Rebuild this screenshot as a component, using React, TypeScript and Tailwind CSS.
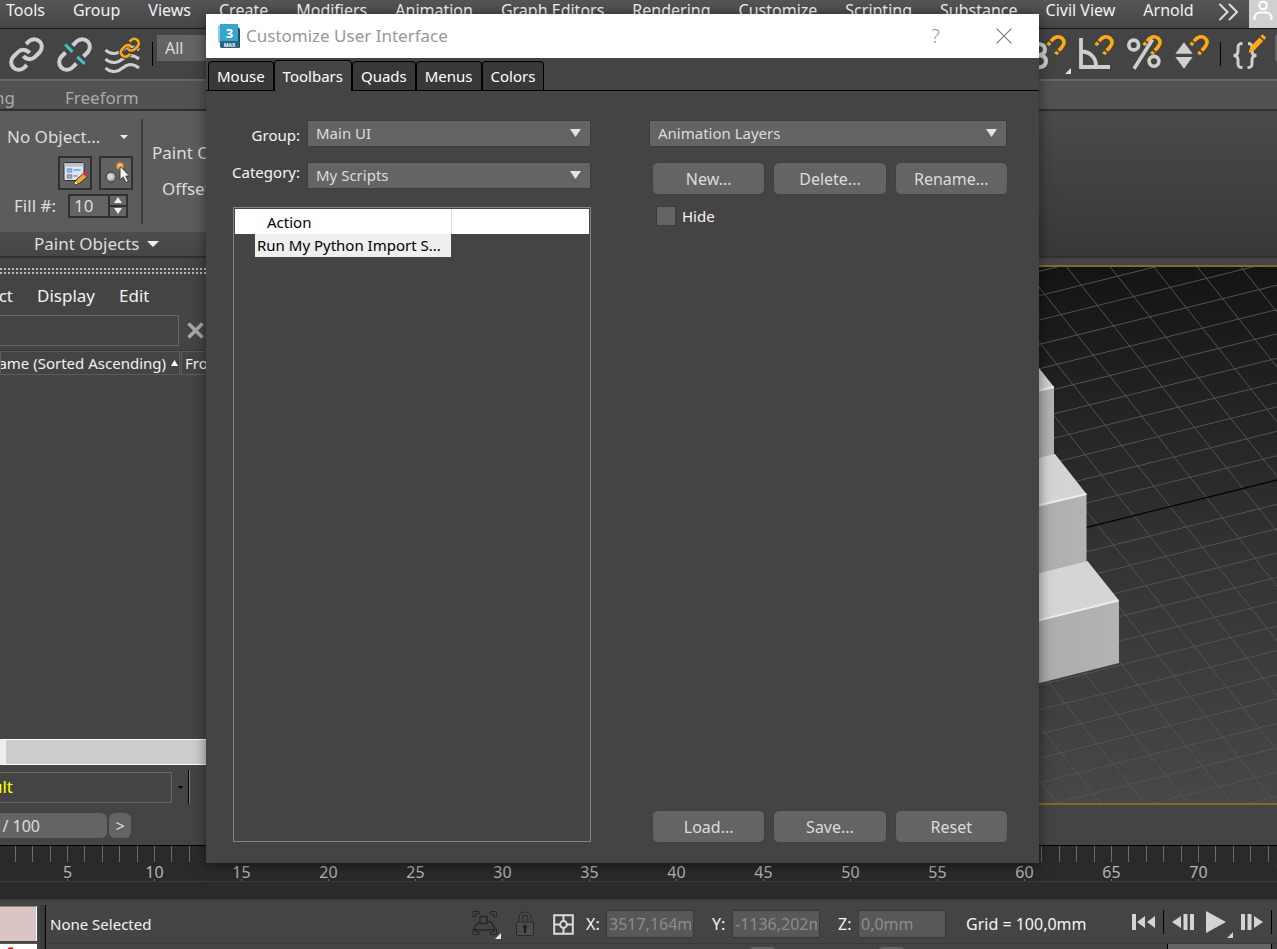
import type { ReactNode } from "react";

const MENUS = [
  "Tools", "Group", "Views", "Create", "Modifiers", "Animation", "Graph Editors",
  "Rendering", "Customize", "Scripting", "Substance", "Civil View", "Arnold",
];

const TABS = ["Mouse", "Toolbars", "Quads", "Menus", "Colors"];

const FRAME_GROUPS = Array.from({ length: 24 }, (_, i) => i * 5);

const CHAIN_A = "M10 13a5 5 0 0 0 7.54.54l3-3a5 5 0 0 0-7.07-7.07l-1.72 1.71";
const CHAIN_B = "M14 11a5 5 0 0 0-7.54-.54l-3 3a5 5 0 0 0 7.07 7.07l1.71-1.71";

function Magnet({ x }: { x: number }) {
  return (
    <g transform={`translate(${x} 36)`} fill="none" stroke="#ffab0f" strokeWidth="3.6">
      <path d="M1.8 11.2 4 8.6" />
      <path d="M5 7.2C8 3 12.5 1.4 16 4.2c3.2 2.8 2.2 6.3 0 8.8l-3.2 3.6" />
      <path d="M11.6 17.8 9.6 20.2" />
    </g>
  );
}

function LinkIcon() {
  return (
    <svg className="size-[37px]" viewBox="0 0 24 24" fill="none" stroke="#cfcfcf" strokeWidth="2.6" aria-hidden="true">
      <path d={CHAIN_A} />
      <path d={CHAIN_B} />
    </svg>
  );
}

function UnlinkIcon() {
  return (
    <svg className="size-[37px]" viewBox="0 0 24 24" fill="none" stroke="#cfcfcf" strokeWidth="2.6" aria-hidden="true">
      <path d="m17.8 13.3 2.76-2.76a5 5 0 0 0-7.07-7.07l-2.72 2.71" />
      <path d="m6.2 10.7-2.74 2.76a5 5 0 0 0 7.07 7.07l2.71-2.71" />
      <path d="m6 5.5 4.7 4.8M13.8 13.6l4.8 4.5" stroke="#3cc4bd" strokeWidth="2" />
    </svg>
  );
}

function SpaceWarpIcon() {
  return (
    <svg className="h-[37px] w-[37px]" viewBox="104 35 37 37" fill="none" aria-hidden="true">
      {[49, 58, 67].map((y) => (
        <path
          key={y}
          d={`M105.5 ${y}q4 4 9.5 3.5c7-.5 8-6.5 15-7q5 0 9 3.5`}
          stroke="#cfcfcf"
          strokeWidth="3"
        />
      ))}
      <g transform="translate(119 36) scale(.9)">
        <path d={CHAIN_A} stroke="#444" strokeWidth="5" />
        <path d={CHAIN_B} stroke="#444" strokeWidth="5" />
        <path d={CHAIN_A} stroke="#ffab0f" strokeWidth="2.9" />
        <path d={CHAIN_B} stroke="#ffab0f" strokeWidth="2.9" />
      </g>
    </svg>
  );
}

function SnapIcons() {
  return (
    <>
      <button type="button" aria-label="Snaps toggle">
        <svg className="h-11 w-10" viewBox="1032 34 40 44" aria-hidden="true">
          <path d="M1034 48.5q2-2.5 5.5-2.5 6.5.5 6.5 5.5 0 5-7 5.5 8 .5 8 6 0 6-8 6.5-3 0-5-1" fill="none" stroke="#cfcfcf" strokeWidth="4" />
          <Magnet x={1047} />
          <path d="M1066 76l6-6v6z" fill="#e0e0e0" />
        </svg>
      </button>
      <button type="button" aria-label="Angle snap">
        <svg className="h-11 w-[39px]" viewBox="1080 34 39 44" aria-hidden="true">
          <path d="M1082 40v29h29M1083 53.5a14 14 0 0 1 14 14" fill="none" stroke="#cfcfcf" strokeWidth="3.8" />
          <Magnet x={1095} />
        </svg>
      </button>
      <button type="button" aria-label="Percent snap">
        <svg className="h-11 w-10" viewBox="1127 34 40 44" aria-hidden="true">
          <g fill="none" stroke="#cfcfcf" strokeWidth="3.6">
            <circle cx="1134.7" cy="47" r="4.9" />
            <circle cx="1155" cy="63.3" r="4.9" />
            <path d="m1153.5 41.5-18.5 29.3" />
          </g>
          <Magnet x={1143} />
        </svg>
      </button>
      <button type="button" aria-label="Spinner snap">
        <svg className="h-11 w-[38px]" viewBox="1175 34 38 44" aria-hidden="true">
          <path d="m1185 44.3-8.6 11.5h17.2zM1176.4 59h17.2l-8.6 11.7z" fill="#cfcfcf" />
          <Magnet x={1190} />
        </svg>
      </button>
    </>
  );
}

function BracesIcon() {
  return (
    <svg className="h-11 w-9" viewBox="1233 34 36 44" fill="none" aria-hidden="true">
      <g stroke="#cfcfcf" strokeWidth="3">
        <path d="M1243.5 45.5c-4 0-4.5 1.5-4.5 4v3.5c0 2.5-1 4.5-4.5 4.5 3.5 0 4.5 2 4.5 4.5v3.5c0 2.5.5 4 4.5 4" />
        <path d="M1249 45.5c3.5 0 4 1.5 4 4v3.5c0 2.5 1 4.5 4.5 4.5-3.5 0-4.5 2-4.5 4.5v3.5c0 2.5-.5 4-4.5 4" />
      </g>
      <path d="m1249.6 54.7 1.6-5.4 3.8 3.4z" fill="#ffab0f" />
      <path d="m1253.3 50.7 9-9.5" stroke="#ffab0f" strokeWidth="5.2" />
      <path d="m1263.3 40.1 2-2.1" stroke="#ffab0f" strokeWidth="5.2" />
    </svg>
  );
}

function Separator() {
  return <span className="h-6 w-px bg-black" />;
}

function MenuBar() {
  return (
    <nav className="flex h-[29px] shrink-0 justify-between border-b border-[#191919] bg-linear-to-b from-[#555555] to-[#464646]">
      <ul className="flex gap-7 pl-[6px] text-[16px] leading-5 whitespace-nowrap text-[#f2f2f2]">
        {MENUS.map((m) => (
          <li key={m}>
            <button type="button">{m}</button>
          </li>
        ))}
      </ul>
      <div className="flex items-start gap-[11px]">
        <button type="button" aria-label="More menus" className="pt-[3px]">
          <svg className="h-[18px] w-5" viewBox="0 0 20 18" fill="none" stroke="#dcdcdc" strokeWidth="2" aria-hidden="true">
            <path d="m1.5 1 8 8-8 8M11 1l8 8-8 8" />
          </svg>
        </button>
        <button type="button" aria-label="Account" className="flex h-7 w-7 justify-center bg-[#d0d0d0]">
          <svg className="h-7 w-6" viewBox="0 0 24 28" fill="none" stroke="#fff" strokeWidth="2" aria-hidden="true">
            <circle cx="12" cy="5.5" r="3.8" />
            <path d="M3.5 20v-2c0-3 2.5-5.5 5.5-5.5h6c3 0 5.5 2.5 5.5 5.5v2" />
          </svg>
        </button>
      </div>
    </nav>
  );
}

function MainToolbar() {
  return (
    <div className="flex h-[52px] shrink-0 justify-between border-b-2 border-[#666666] bg-[#444444]">
      <div className="flex items-center gap-[11px] pl-2">
        <button type="button" aria-label="Select and link"><LinkIcon /></button>
        <button type="button" aria-label="Unlink selection"><UnlinkIcon /></button>
        <button type="button" aria-label="Bind to space warp"><SpaceWarpIcon /></button>
        <div className="flex items-center gap-1">
          <Separator />
          <select aria-label="Selection filter" className="mb-3 h-[26px] w-20 appearance-none bg-[#646464] pl-2 text-[16px] text-[#dcdcdc]">
            <option>All</option>
          </select>
        </div>
      </div>
      <div className="flex items-center gap-2">
        <SnapIcons />
        <div className="flex items-center gap-[11px]">
          <Separator />
          <button type="button" aria-label="Edit named selection sets"><BracesIcon /></button>
        </div>
        <span className="-ml-px mb-3 h-[26px] w-[2px] bg-[#646464]" />
      </div>
    </div>
  );
}

function Ribbon() {
  return (
    <section className="shrink-0">
      <div className="flex h-[30px] items-center gap-[50px] border-b-2 border-[#2e2e2e] bg-[#525252] pt-[5px] text-[17px] leading-6 text-[#a9a9a9]">
        <button type="button" className="flex w-[15px] justify-end overflow-hidden">Modeling</button>
        <button type="button">Freeform</button>
      </div>
      <div className="flex h-[147px] border-b-2 border-[#303030] bg-linear-to-b from-[#4a4a4a] to-[#383838] text-[17px] text-[#dedede]">
        <div className="flex w-[420px] shrink-0 flex-col">
          <div className="flex flex-1 bg-[#5c5c5c]">
            <div className="my-2 flex w-[143px] flex-col border-r-2 border-[#3c3c3c] pr-2 pl-[7px]">
              <button type="button" className="flex h-9 items-center justify-between pr-[5px]">
                No Object...
                <svg className="h-1 w-2" viewBox="0 0 8 4" aria-hidden="true"><path d="M0 0h8L4 4z" fill="#eee" /></svg>
              </button>
              <div className="flex justify-end gap-[7px] pt-px">
                <button type="button" aria-label="Edit object list" className="flex size-[34px] items-center justify-center border-2 border-[#303030] bg-[#626262]">
                  <svg className="size-[26px]" viewBox="0 0 26 26" aria-hidden="true">
                    <rect x="2" y="2.5" width="20" height="18" rx="1.5" fill="#dfe5ec" stroke="#2b2f36" />
                    <path d="M2.5 3h19v3.5h-19z" fill="#b9c0c8" />
                    <path d="M5.5 9h4v3h-4zM11.5 10h7" stroke="#6ba6e6" strokeWidth="1.5" fill="#9cc4f0" />
                    <path d="M5.5 15h4v3h-4zM11.5 16h4" stroke="#8b9098" strokeWidth="1.5" fill="#b5b9be" />
                    <path d="m12.5 24.5 1.5-4.5 8-7 3.500 3.500-8 7z" fill="#efa63a" stroke="#4a2d10" />
                    <path d="m20.500 13.500 1.800-1.800 3.400 3.400-1.800 1.800z" fill="#d8333b" />
                    <path d="m12.500 24.500 1-3 2 2z" fill="#fff" />
                  </svg>
                </button>
                <button type="button" aria-label="Pick objects" className="flex size-[34px] items-center justify-center border-2 border-[#303030] bg-[#626262]">
                  <svg className="size-[26px]" viewBox="0 0 26 26" aria-hidden="true">
                    <circle cx="8" cy="17" r="5" fill="#a4a4a4" stroke="#333" />
                    <circle cx="7.500" cy="16.500" r="3" fill="#d4d4d4" />
                    <circle cx="17" cy="6" r="3.800" fill="#f08a24" />
                    <circle cx="17" cy="6" r="2" fill="#ffe1a0" />
                    <path d="M17 6v14l3.300-3 2.500 5.500 2.600-1.200-2.600-5.300h3.700z" fill="#f1f1f4" stroke="#2d2d38" strokeWidth=".9" />
                  </svg>
                </button>
              </div>
              <label className="flex items-center justify-end pt-[3px] pr-[5px]">
                <span className="pr-3">Fill #:</span>
                <span className="flex h-6 w-[60px] border-2 border-[#303030]">
                  <input type="text" defaultValue="10" className="w-10 min-w-0 border-r-2 border-[#303030] bg-[#646464] pl-1 outline-none" />
                  <span className="flex flex-1 flex-col gap-[2px] bg-[#303030]">
                    <button type="button" aria-label="Increase" className="flex flex-1 items-center justify-center bg-[#666666]">
                      <svg className="h-[6px] w-2" viewBox="0 0 8 6" aria-hidden="true"><path d="M0 6h8L4 0z" fill="#eee" /></svg>
                    </button>
                    <button type="button" aria-label="Decrease" className="flex flex-1 items-center justify-center bg-[#666666]">
                      <svg className="h-[6px] w-2" viewBox="0 0 8 6" aria-hidden="true"><path d="M0 0h8L4 6z" fill="#eee" /></svg>
                    </button>
                  </span>
                </span>
              </label>
            </div>
            <div className="flex flex-col gap-3 pt-[30px] pl-[9px] leading-6">
              <span>Paint On:</span>
              <span className="pl-[10px]">Offset:</span>
            </div>
          </div>
          <button type="button" className="flex h-6 items-center gap-2 bg-linear-to-b from-[#4d4d4d] to-[#464646] pl-[34px]">
            Paint Objects
            <svg className="h-[6px] w-3" viewBox="0 0 12 6" aria-hidden="true"><path d="M0 0h12L6 6z" fill="#eee" /></svg>
          </button>
        </div>
      </div>
    </section>
  );
}

function SceneExplorer() {
  return (
    <aside className="flex w-[206px] shrink-0 flex-col overflow-hidden text-[17px] whitespace-nowrap text-[#f2f2f2]">
      <div className="mt-[10px] flex flex-col gap-[2px]">
        <span className="border-t-2 border-dotted border-[#bbbbbb]" />
        <span className="border-t-2 border-dotted border-[#bbbbbb]" />
      </div>
      <div className="flex h-[41px] items-center gap-6 pt-[2px]">
        <button type="button" className="flex w-[13px] justify-end overflow-hidden">Select</button>
        <button type="button">Display</button>
        <button type="button">Edit</button>
      </div>
      <div className="flex items-center gap-2">
        <input type="text" aria-label="Find in scene" className="h-[31px] w-[179px] border border-l-0 border-[#666666] bg-transparent outline-none" />
        <button type="button" aria-label="Clear search">
          <svg className="size-[17px]" viewBox="0 0 17 17" stroke="#a8a8a8" strokeWidth="3.5" aria-hidden="true">
            <path d="m1.5 1.5 14 14M15.500 1.500l-14 14" />
          </svg>
        </button>
      </div>
      <div className="mt-1 flex gap-px border-t border-[#383838] text-[15px]">
        <button type="button" className="flex h-6 w-[180px] shrink-0 items-center justify-end gap-[5px] overflow-hidden border border-[#5c5c5c] pr-[1px]">
          Name (Sorted Ascending)
          <svg className="h-[6px] w-[7px] shrink-0" viewBox="0 0 7 6" aria-hidden="true"><path d="M0 6h7L3.500 0z" fill="#fff" /></svg>
        </button>
        <button type="button" className="flex h-6 w-20 shrink-0 items-center border border-[#5c5c5c] pl-[3px]">Frozen</button>
      </div>
      <div className="flex-1" />
      <div className="h-[26px] border-y border-l-[6px] border-white border-l-[#eeeeee] bg-[#cdcdcd]" />
      <div className="mt-[5px] mb-[2px] flex items-center">
        <div className="flex h-[31px] w-[172px] items-center border border-l-0 border-[#666666]">
          <span className="flex w-[13px] justify-end overflow-hidden text-[#ffff00]">Default</span>
        </div>
        <button type="button" aria-label="Layer list" className="flex w-4 justify-center">
          <svg className="h-[3px] w-[5px]" viewBox="0 0 5 3" aria-hidden="true"><path d="M0 0h5L2.500 3z" fill="#000" /></svg>
        </button>
        <span className="h-[34px] w-[2px] border-l border-black bg-[#7c7c7c]" />
      </div>
    </aside>
  );
}

function Viewport() {
  const shallow = Array.from({ length: 36 }, (_, i) => 480 + (i - 12) * 24.35);
  const steep = Array.from({ length: 36 }, (_, i) => 1066.7 + (i - 28) * 43.6);
  return (
    <div className="mt-[7px] mb-px min-h-0 flex-1 border-y-2 border-[#806b28]">
      <svg className="block h-full w-full" viewBox="206 267 1071 536" preserveAspectRatio="xMaxYMin slice" role="img" aria-label="Perspective viewport">
        <defs>
          <linearGradient id="sky" x1="0" y1="0" x2="0" y2="1">
            <stop offset="0" stopColor="#141414" />
            <stop offset=".5" stopColor="#343434" />
            <stop offset=".8" stopColor="#434343" />
            <stop offset="1" stopColor="#4b4b4b" />
          </linearGradient>
          <linearGradient id="front" x1="0" y1="0" x2="1" y2="0">
            <stop offset="0" stopColor="#a9a9a9" />
            <stop offset="1" stopColor="#b3b3b3" />
          </linearGradient>
        </defs>
        <rect x="0" y="267" width="1277" height="600" fill="url(#sky)" />
        <g stroke="#535353" strokeWidth="1">
          {shallow.map((y) => (
            <line key={y} x1="206" y1={y + 266.7} x2="1277" y2={y} />
          ))}
          {steep.map((x) => (
            <line key={x} x1={x} y1="267" x2={x + 426.5} y2="803" />
          ))}
        </g>
        <line x1="206" y1="746.7" x2="1277" y2="480" stroke="#000" strokeWidth="1.3" />
        <path d="M1000 400v73l54-13V387z" fill="url(#front)" />
        <path d="M1000 318l39 50 15 19-54 13z" fill="#d2d2d2" />
        <path d="M1000 515v72l86.500-22V494z" fill="url(#front)" />
        <path d="M1000 467.500l55-13.500 31.500 40L1000 514.700z" fill="#d4d4d4" />
        <path d="M1000 630v63l119-30V600.500z" fill="url(#front)" />
        <path d="M1000 583l87.500-22 31.500 39.500L1000 630z" fill="#d5d5d5" />
        <path d="m1000 400 54-13M1000 514.700l86.500-20.700M1000 630l118.500-29.500" fill="none" stroke="#ececec" strokeWidth="2" />
      </svg>
    </div>
  );
}

function TimeSlider() {
  return (
    <div className="flex h-10 shrink-0 items-center gap-[2px] border-b border-black text-[16px] text-[#dedede]">
      <div className="flex h-[25px] w-[107px] items-center rounded-r-md bg-[#646464]">
        <span className="flex w-10 justify-end overflow-hidden whitespace-nowrap">0 / 100</span>
      </div>
      <button type="button" aria-label="Next frame" className="h-[25px] w-[22px] rounded-md bg-[#646464] leading-5">&gt;</button>
    </div>
  );
}

function TrackBar() {
  return (
    <div className="h-[54px] shrink-0 overflow-hidden border-b border-[#383838] bg-[#2a2a2a]">
      <div className="flex h-9 border-b border-[#3c3c3c]">
        {FRAME_GROUPS.map((f) => (
          <div key={f} className="flex w-[87px] shrink-0 flex-col items-center first:-ml-[63px]">
            <div className="grid w-full grid-cols-5">
              {[0, 1, 2, 3, 4].map((t) => (
                <span key={t} className="mx-auto h-4 w-px bg-[#6c6c6c]" />
              ))}
            </div>
            <span className="h-[17px] text-[16px] leading-5 text-[#b4b4b4]">{f}</span>
            <span className="h-[3px] w-px bg-[#6c6c6c]" />
          </div>
        ))}
      </div>
    </div>
  );
}

function Coordinate({ axis, value }: { axis: string; value: string }) {
  return (
    <label className="flex items-center gap-[5px]">
      <span className="w-[15px] whitespace-nowrap">{axis}:</span>
      <input
        type="text"
        defaultValue={value}
        className="h-7 w-[88px] border border-[#3a3a3a] bg-[#585858] px-[2px] text-[#8c8c8c] outline-none"
      />
    </label>
  );
}

function StatusBar() {
  return (
    <footer className="flex h-[49px] shrink-0 overflow-hidden bg-[#444444] text-[16px] whitespace-nowrap text-[#f4f4f4]">
      <div className="flex w-[37px] shrink-0 flex-col pt-[6px]">
        <div className="h-[35px] border-t border-r border-white border-t-[#888888] bg-[#dcc4c4]" />
        <div className="mt-[2px] flex-1 border-t border-[#555555] bg-white">
          <svg className="ml-[7px] h-[5px] w-[7px]" viewBox="0 0 7 5" fill="none" stroke="#e00000" strokeWidth="1.4" aria-hidden="true">
            <path d="M1 5q1-1 5-1" />
          </svg>
        </div>
      </div>
      <div className="mt-[5px] mr-1 ml-[3px] w-[6px] shrink-0 border-r border-black bg-[#3a3a3a]" />
      <div className="flex min-w-0 flex-1 flex-col">
        <div className="flex h-[43px] shrink-0 items-center justify-between">
          <span className="pt-[6px] text-[15px]">None Selected</span>
          <div className="flex items-center">
            <div className="flex items-center pt-[5px]">
              <button type="button" aria-label="Isolate selection" className="mr-[14px]">
                <svg className="h-[30px] w-[30px]" viewBox="0 0 30 30" fill="none" stroke="#262626" strokeWidth="1.3" aria-hidden="true">
                  <path d="M2 8V2.500h6V5H4.500v3zM19.500 2.500h6V8H23V5h-3.500zM2 20v5.500h6V23H4.500v-3zM19.500 25.500h6V20H23v3h-3.500z" strokeWidth="1" />
                  <path d="M9 7.500h7v7H9zM8.500 12.500 3.500 18v3h20v-3l-4-5.500h-3.500" />
                  <path d="m24 30 6-6v6z" fill="#e6e6e6" stroke="none" />
                </svg>
              </button>
              <button type="button" aria-label="Lock selection" className="mr-[18px]">
                <svg className="h-[26px] w-5" viewBox="0 0 20 26" aria-hidden="true">
                  <path d="M5.500 12V7a4.500 4.500 0 0 1 9 0v5" fill="none" stroke="#2a2a2a" strokeWidth="4" />
                  <path d="M5.500 12V7a4.500 4.500 0 0 1 9 0v5" fill="none" stroke="#4c4c4c" strokeWidth="2" />
                  <rect x="1.500" y="11" width="17" height="13.500" rx="1" fill="#4c4c4c" stroke="#2a2a2a" />
                  <path d="M10 14a2.200 2.200 0 0 1 1 4V22H9v-4a2.200 2.200 0 0 1 1-4" fill="#1c1c1c" />
                </svg>
              </button>
              <button type="button" aria-label="Absolute mode transform" className="mr-3">
                <svg className="size-[21px]" viewBox="0 0 21 21" fill="none" stroke="#dcdcdc" strokeWidth="2" aria-hidden="true">
                  <path d="M1.200 1.200h18.600v18.600H1.200zM10.500 1v6M10.500 14v6M1 10.500h6M14 10.500h6" />
                  <circle cx="10.5" cy="10.5" r="3.4" />
                </svg>
              </button>
              <div className="flex items-center gap-[18px]">
                <Coordinate axis="X" value="3517,164mm" />
                <Coordinate axis="Y" value="-1136,202mm" />
                <Coordinate axis="Z" value="0,0mm" />
                <span className="w-[168px] pl-[2px]">Grid = 100,0mm</span>
              </div>
            </div>
            <div className="flex items-center gap-2">
              <button type="button" aria-label="Go to start">
                <svg className="h-4 w-[23px]" viewBox="0 0 23 16" fill="#d4d4d4" aria-hidden="true"><path d="M0 0h4v16H0zM13 2v12L5 8zM23 2v12L15 8z" /></svg>
              </button>
              <Separator />
              <button type="button" aria-label="Previous frame">
                <svg className="h-4 w-[22px]" viewBox="0 0 22 16" fill="#d4d4d4" aria-hidden="true"><path d="M9 2v12L0 8zM11.500 0h4v16h-4zM18 0h4v16h-4z" /></svg>
              </button>
              <button type="button" aria-label="Play" className="pl-1">
                <svg className="h-[34px] w-[27px]" viewBox="0 0 27 34" fill="#d4d4d4" aria-hidden="true"><path d="M0 6v22l20-11zM21 33l6-6v6z" /></svg>
              </button>
              <button type="button" aria-label="Next key">
                <svg className="h-4 w-[22px]" viewBox="0 0 22 16" fill="#d4d4d4" aria-hidden="true"><path d="M0 0h4v16H0zM6.500 0h4v16h-4zM13 2v12l9-6z" /></svg>
              </button>
              <span className="mr-[5px] h-6 w-px bg-black" />
            </div>
          </div>
        </div>
        <div className="flex h-[6px] shrink-0 justify-end border-t border-[#3a3a3a]">
          <span className="mt-[3px] mr-[100px] h-2 w-[29px] rounded-t-md bg-[#646464]" />
          <span className="mt-[3px] mr-[261px] h-2 w-[29px] rounded-t-md bg-[#646464]" />
          <span className="mr-[5px] h-2 w-[105px] border-x border-black bg-[#646464]" />
        </div>
      </div>
    </footer>
  );
}

function Combo({ id, value, label }: { id: string; value: string; label?: string }) {
  return (
    <div className="relative flex-1">
      <select
        id={id}
        aria-label={label}
        className="block h-[27px] w-full appearance-none border border-[#3c3c3c] bg-[#646464] px-2 text-[15px] text-[#dcdcdc]"
      >
        <option>{value}</option>
      </select>
      <svg className="pointer-events-none absolute top-[9px] right-[10px] h-2 w-[11px]" viewBox="0 0 11 8" aria-hidden="true">
        <path d="M0 0h11L5.500 8z" fill="#e4e4e4" />
      </svg>
    </div>
  );
}

function PushButton({ children }: { children: ReactNode }) {
  return (
    <button type="button" className="h-[33px] rounded-md border border-[#404040] bg-[#646464] text-[16px] text-[#dcdcdc]">
      {children}
    </button>
  );
}

function CustomizeDialog() {
  return (
    <div role="dialog" aria-labelledby="dialog-title" className="absolute top-[14px] left-[206px] flex h-[849px] w-[833px] flex-col bg-[#444444] shadow-[0_2px_12px_rgba(0,0,0,0.5)]">
      <header className="flex h-11 shrink-0 items-center bg-white pr-[27px] pl-3">
        <svg className="h-6 w-[22px]" viewBox="0 0 22 24" aria-hidden="true">
          <path d="M0 2 3 0v20L0 18z" fill="#8fcfe3" />
          <path d="M2 0h18v18H2z" fill="#37a5cc" />
          <path d="m20 3 2 2v19l-2-1z" fill="#1c4f66" />
          <path d="M2 17h19v7H3l-1-1z" fill="#2b6480" />
          <text x="11.5" y="13.5" textAnchor="middle" fontSize="13" fontWeight="700" fill="#fff">3</text>
          <text x="11.5" y="22.5" textAnchor="middle" fontSize="5" fontWeight="700" fill="#fff">MAX</text>
        </svg>
        <h1 id="dialog-title" className="ml-[6px] flex-1 text-[17px] text-[#999999]">Customize User Interface</h1>
        <button type="button" aria-label="Help" className="mr-[56px] text-[20px] font-light text-[#999999]">?</button>
        <button type="button" aria-label="Close">
          <svg className="size-4" viewBox="0 0 16 16" stroke="#888888" strokeWidth="1.1" aria-hidden="true"><path d="m.5.5 15 15M15.500.5l-15 15" /></svg>
        </button>
      </header>
      <div role="tablist" className="flex h-[33px] shrink-0 items-end border-b border-black pl-[2px] text-[15px] text-white">
        {TABS.map((t) => (
          <button
            key={t}
            type="button"
            role="tab"
            aria-selected={t === "Toolbars"}
            className="h-[29px] rounded-t-[4px] border border-b-0 border-black bg-[#383838] px-2 aria-selected:-mb-px aria-selected:h-[31px] aria-selected:bg-[#444444]"
          >
            {t}
          </button>
        ))}
      </div>
      <div className="flex min-h-0 flex-1 gap-[58px] pt-[29px] pr-[31px] pb-5 pl-[27px]">
        <div className="flex w-[358px] flex-col pb-px">
          <div className="flex items-end gap-[7px]">
            <label htmlFor="group" className="w-[67px] text-right text-[15px] leading-6 text-[#f4f4f4]">Group:</label>
            <Combo id="group" value="Main UI" />
          </div>
          <div className="mt-[15px] flex items-start gap-[7px]">
            <label htmlFor="category" className="flex w-[67px] justify-end text-[15px] leading-5 text-[#f4f4f4]">Category:</label>
            <Combo id="category" value="My Scripts" />
          </div>
          <div className="mt-[18px] flex-1 border border-[#83838c] p-px">
            <table className="w-full table-fixed border-collapse text-left text-[15px] leading-[23px] text-black">
              <thead>
                <tr className="bg-white">
                  <th className="w-[216px] border-r border-[#dddddd] pt-[2px] pl-8 font-normal">Action</th>
                  <th aria-label="Shortcut" />
                </tr>
              </thead>
              <tbody>
                <tr>
                  <td className="pl-5">
                    <div className="bg-[#efefef] pl-[2px] whitespace-nowrap">Run My Python Import S...</div>
                  </td>
                  <td />
                </tr>
              </tbody>
            </table>
          </div>
        </div>
        <div className="flex flex-1 flex-col">
          <div className="flex pr-px">
            <Combo id="toolbar" value="Animation Layers" label="Toolbar" />
          </div>
          <div className="mt-[15px] grid grid-cols-3 gap-2 pl-[3px]">
            <PushButton>New...</PushButton>
            <PushButton>Delete...</PushButton>
            <PushButton>Rename...</PushButton>
          </div>
          <label className="mt-[10px] flex items-center gap-[6px] self-start pl-[7px] text-[15px] text-[#f4f4f4]">
            <input type="checkbox" className="size-5 appearance-none border border-[#3c3c3c] bg-[#646464]" />
            Hide
          </label>
          <div className="mt-auto grid grid-cols-3 gap-2 pl-[3px]">
            <PushButton>Load...</PushButton>
            <PushButton>Save...</PushButton>
            <PushButton>Reset</PushButton>
          </div>
        </div>
      </div>
    </div>
  );
}

export default function App() {
  return (
    <div className="relative flex h-screen min-h-[900px] flex-col overflow-hidden bg-[#444444] font-['Noto_Sans',sans-serif]">
      <MenuBar />
      <MainToolbar />
      <Ribbon />
      <main className="flex min-h-0 flex-1">
        <SceneExplorer />
        <Viewport />
      </main>
      <TimeSlider />
      <TrackBar />
      <StatusBar />
      <CustomizeDialog />
    </div>
  );
}
